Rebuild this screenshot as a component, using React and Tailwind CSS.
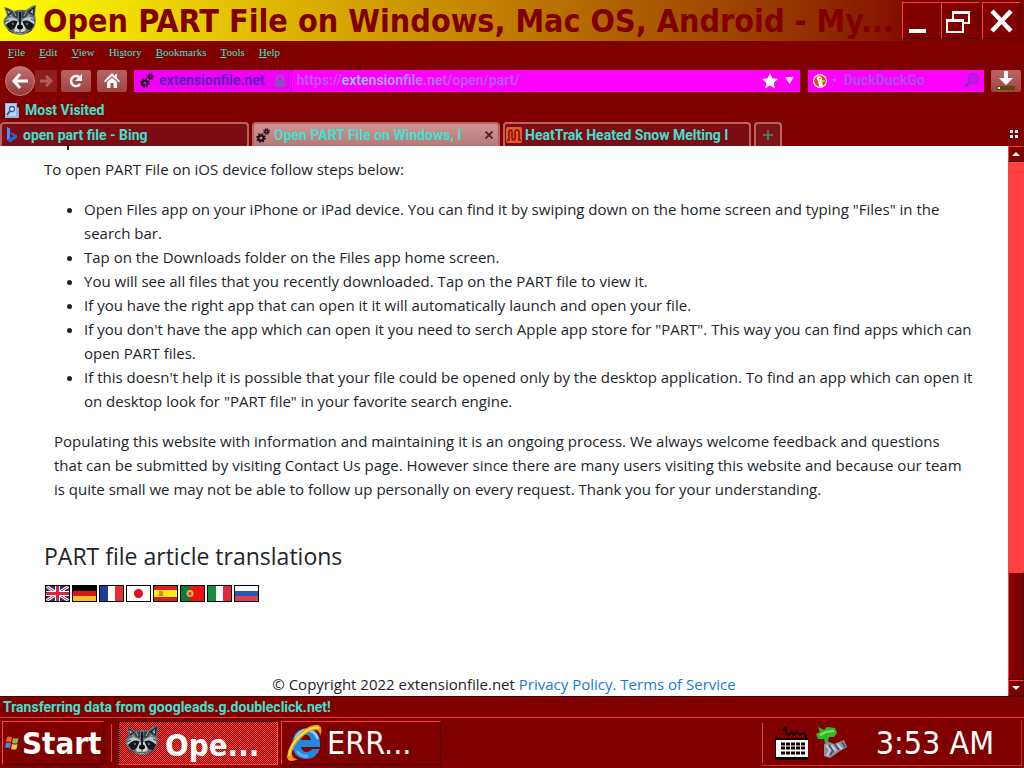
import React from 'react';

const raised = 'border border-t-[#ff4040] border-l-[#ff4040] border-b-[#401008] border-r-[#401008]';
const uiFont = "font-['Roboto','Liberation_Sans',sans-serif] text-[14px] font-bold";
const tahoma = "font-['DejaVu_Sans_Condensed','DejaVu_Sans',Tahoma,sans-serif]";

const Raccoon = ({ className }) => (
  <svg viewBox="0 0 34 32" className={className} aria-hidden="true">
    <path d="M1 2 L5 3 L11 6 Q17 4 23 5 L29 1 L33 0 L32 10 Q34 17 31 23 Q25 30 17 30 Q8 29 4 24 Q-1 19 1 14 L4 10 Z" fill="#66737b" />
    <path d="M3 3 L10 7 L5 11 Z M32 1 L24 7 L31 11 Z" fill="#1c2428" />
    <path d="M4 5 L8 7 L5 9 Z M30 4 L27 7 L30 9 Z" fill="#9aa7aa" />
    <path d="M9 8 L15 6 L15 13 L11 12 Z M19 6 L25 8 L22 13 L18 13 Z" fill="#364148" />
    <path d="M11 7 L13 11 M23 7 L21 11 M7 10 L9 12 M27 10 L25 12" stroke="#a2afb4" />
    <path d="M4 14 Q9 10 15 15 L14 18 Q9 16 3 20 Q1 18 4 14 Z M30 13 Q24 10 19 15 L20 18 Q25 16 31 19 Q32 17 30 13 Z" fill="#b9c6ca" />
    <path d="M3 20 Q8 14 14 16 L14 20 Q11 25 7 25 Z M31 20 Q26 14 20 16 L20 20 Q23 25 28 25 Z" fill="#11171b" />
    <path d="M14 18 Q17 15 20 18 L23 24 Q20 29 17 29 Q13 29 11 25 Z" fill="#cfd5d2" />
    <path d="M16 7 H18 V20 H16 Z" fill="#161d21" />
    <ellipse cx="17" cy="22" rx="3" ry="2.500" fill="#050708" />
    <path d="M17 24 V27 M13 27 Q17 29 21 27" stroke="#39434a" fill="none" />
    <circle cx="10" cy="19" r="1" fill="#7e8a90" />
    <circle cx="24" cy="19" r="1" fill="#7e8a90" />
    <path d="M5 25 L10 28 M29 25 L24 28 M2 17 L6 15 M32 16 L28 14" stroke="#333d44" />
  </svg>
);

const Gears = ({ className }) => (
  <svg viewBox="0 0 14 15" className={className} fill="none" stroke="#1a0a14" aria-hidden="true">
    <circle cx="5" cy="10" r="2.6" strokeWidth="2" />
    <circle cx="5" cy="10" r="4" strokeWidth="1.6" strokeDasharray="1.6 1.54" />
    <circle cx="10.500" cy="3.500" r="1.500" strokeWidth="1.500" />
    <circle cx="10.500" cy="3.500" r="2.700" strokeWidth="1.200" strokeDasharray="1.200 0.920" />
  </svg>
);

const WindowsFlag = () => (
  <svg viewBox="0 0 14 14" className="h-[14px] w-[14px] shrink-0" aria-hidden="true">
    <path d="M2 1 Q4 0 7 1.500 L6 6.500 Q4 5 1 6 Z" fill="#f0622c" />
    <path d="M8 2 Q11 3 13.500 2 L12.500 7 Q10 8 7 7 Z" fill="#7cc242" />
    <path d="M1 7 Q4 6 6 7.500 L5 12.500 Q3 11 0 12 Z" fill="#4a86e8" />
    <path d="M7 8 Q10 9 12.500 8 L11.500 13 Q9 14 6 13 Z" fill="#fbc72e" />
  </svg>
);

const IeLogo = () => (
  <svg viewBox="0 0 36 38" className="h-[38px] w-9 shrink-0" aria-hidden="true">
    <path
      d="M34 23 H15 Q16 28 21 28 Q24 28 26 25 H34 Q30 35 20 35 Q7 34 6 20 Q7 5 21 4 Q35 5 34 23 Z M15 16 H25 Q24 11 20 11 Q16 11 15 16 Z"
      fill="#2088e0"
      fillRule="evenodd"
    />
    <path d="M9 15 Q13 6 21 6 Q29 7 32 15" stroke="#8cd4ff" strokeWidth="2.500" fill="none" />
    <path d="M11 27 Q15 33 22 32" stroke="#58b4f4" strokeWidth="3" fill="none" />
    <path d="M12 35 Q2 40 1 33 Q2 20 15 8 Q28 -2 34 2 Q37 5 34 12 Q34 7 30 6 Q23 6 14 15 Q5 25 6 31 Q7 35 12 35 Z" fill="#f0981b" />
    <path d="M3 32 Q4 20 16 10 Q26 2 33 4" stroke="#ffe04a" strokeWidth="2" fill="none" />
  </svg>
);

const TitleBar = () => (
  <header className="flex h-[41px] items-center bg-linear-to-r from-[#ffff00] to-[#800000] to-90% pr-[3px] pl-[3px]">
    <Raccoon className="h-8 w-[34px] shrink-0" />
    <h1 className={`${tahoma} ml-1.5 min-w-0 flex-1 pt-0.5 text-[32px] leading-[39px] font-bold whitespace-nowrap text-[#800000]`}>
      Open PART File on Windows, Mac OS, Android - My...
    </h1>
    <div className="flex">
      <button aria-label="Minimize" className={`${raised} h-[37px] w-[39px] bg-[#800000]`}>
        <svg viewBox="0 0 37 35" fill="#fff">
          <path d="M6 26 H23 V30 H6 Z" />
        </svg>
      </button>
      <button aria-label="Restore" className={`${raised} h-[37px] w-[39px] bg-[#800000]`}>
        <svg viewBox="0 0 37 35" fill="none" stroke="#fff" strokeWidth="2">
          <path d="M11 16 V9 H27 V20 H22 M11 10 H27" />
          <path d="M5 17 H21 V29 H5 Z M5 18 H21" />
        </svg>
      </button>
      <button aria-label="Close" className={`${raised} ml-0.5 h-[37px] w-[39px] bg-[#800000]`}>
        <svg viewBox="0 0 37 35" stroke="#fff" strokeWidth="4.500">
          <path d="M9 8 L28 28 M28 8 L9 28" />
        </svg>
      </button>
    </div>
  </header>
);

const menus = [
  ['', 'F', 'ile'],
  ['', 'E', 'dit'],
  ['', 'V', 'iew'],
  ['Hi', 's', 'tory'],
  ['', 'B', 'ookmarks'],
  ['', 'T', 'ools'],
  ['', 'H', 'elp'],
];

const MenuBar = () => (
  <nav className="flex h-[22px] gap-3.5 pl-2 font-['Liberation_Serif',serif] text-[11px] leading-[22px] text-[#40e0d0]">
    {menus.map(([pre, key, post]) => (
      <button key={key + post}>
        {pre}
        <span className="underline">{key}</span>
        {post}
      </button>
    ))}
  </nav>
);

const navButton = 'flex h-[22px] w-[30px] shrink-0 items-center justify-center rounded-xs bg-linear-to-b from-[#b86464] to-[#a04444]';

const NavBar = () => (
  <div className="flex h-[35px] items-center pr-[3px] pl-[5px]">
    <button aria-label="Back" className="flex h-[30px] w-[30px] shrink-0 items-center justify-center rounded-full border border-[#c88080] bg-linear-to-b from-[#c07070] to-[#983838]">
      <svg viewBox="0 0 18 18" className="h-[18px] w-[18px]" fill="none" stroke="#fff" strokeWidth="3">
        <path d="M9 2 L3 9 L9 16 M3 9 H17" />
      </svg>
    </button>
    <button aria-label="Forward" className="flex h-[22px] w-[22px] shrink-0 items-center justify-center bg-[#8c1e1e]">
      <svg viewBox="0 0 14 14" className="h-[14px] w-[14px]" fill="none" stroke="#b85858" strokeWidth="3">
        <path d="M7 2 L12 7 L7 12 M1 7 H12" />
      </svg>
    </button>
    <button aria-label="Reload" className={`${navButton} ml-1`}>
      <svg viewBox="0 0 16 16" className="h-4 w-4">
        <path d="M12 11 A5 5 0 1 1 11 4" fill="none" stroke="#fff" strokeWidth="2.500" />
        <path d="M14 1 V8 H7 Z" fill="#fff" />
      </svg>
    </button>
    <button aria-label="Home" className={`${navButton} ml-1.5`}>
      <svg viewBox="0 0 16 16" className="h-4 w-4" fill="#fff">
        <path d="M8 0 L16 8 L15 9.500 L8 3 L1 9.500 L0 8 Z M11 1 H13 V5 L11 3 Z" />
        <path d="M3 9 L8 4.500 L13 9 V15 H9.500 V10 H6.500 V15 H3 Z" />
      </svg>
    </button>
    <div className={`${uiFont} ml-[7px] flex h-[22px] min-w-0 flex-1 items-center bg-[#ff00ff]`}>
      <button className="flex h-full shrink-0 items-center border-r border-[#c000d0] bg-[#f000f4] pl-1.5 text-[#5a20c0]">
        <Gears className="h-[15px] w-[14px]" />
        <span className="ml-[5px]">extensionfile.net</span>
        <svg viewBox="0 0 12 14" className="mr-[5px] ml-[9px] h-[14px] w-3" aria-hidden="true">
          <path d="M3 6 V4 Q3 1.500 6 1.500 Q9 1.500 9 4 V6" fill="none" stroke="#a050c8" strokeWidth="2" />
          <path d="M1 6 H11 V13 H1 Z" fill="#8a50b8" />
        </svg>
      </button>
      <input
        aria-label="Address"
        defaultValue="https://extensionfile.net/open/part/"
        className="ml-[5px] min-w-0 flex-1 bg-linear-to-r from-[#b45cf4] from-[45px] via-[#86ccf4] via-[45px] to-[#b45cf4] to-[156px] bg-clip-text text-transparent outline-none"
      />
      <button aria-label="Bookmark this page" className="shrink-0">
        <svg viewBox="0 0 16 16" className="h-4 w-4" fill="#fff">
          <path d="M8 0 L10.300 5.300 L16 6 L11.800 9.800 L13 15.500 L8 12.500 L3 15.500 L4.200 9.800 L0 6 L5.700 5.300 Z" />
        </svg>
      </button>
      <button aria-label="Show history" className="mr-[6px] ml-[7px] shrink-0">
        <svg viewBox="0 0 9 7" className="h-[7px] w-[9px]" fill="#ffd8ff">
          <path d="M0 0 H9 L4.500 7 Z" />
        </svg>
      </button>
    </div>
    <div className={`${uiFont} ml-2 flex h-[22px] w-[176px] shrink-0 items-center bg-[#ff00ff] px-[5px]`}>
      <svg viewBox="0 0 14 14" className="h-[14px] w-[14px] shrink-0" aria-hidden="true">
        <circle cx="7" cy="7" r="7" fill="#fff0d8" />
        <circle cx="7" cy="7" r="5.800" fill="#e04818" />
        <path d="M4 3 Q7 1 9 4 L9 6 L12 7 L9 8.500 L10 12 Q7 13 6 12 L5 7 Q3 5 4 3 Z" fill="#fff" />
        <path d="M8 6.500 H12 L9 9 Z" fill="#f8b020" />
        <circle cx="7" cy="4.500" r="0.700" fill="#333" />
      </svg>
      <svg viewBox="0 0 5 3" className="ml-[5px] h-[3px] w-[5px] shrink-0" fill="#c070f0" aria-hidden="true">
        <path d="M0 0 H5 L2.500 3 Z" />
      </svg>
      <input aria-label="Search" placeholder="DuckDuckGo" className="ml-[7px] min-w-0 flex-1 outline-none placeholder:text-[#a850e8]" />
      <button aria-label="Go" className="shrink-0">
        <svg viewBox="0 0 15 15" className="h-[15px] w-[15px]" fill="none" stroke="#7038c8">
          <circle cx="9.500" cy="5.500" r="4.500" strokeWidth="1.500" />
          <circle cx="9.500" cy="5.500" r="2" />
          <path d="M6 9 L1 14" strokeWidth="2.500" />
        </svg>
      </button>
    </div>
    <button aria-label="Downloads" className={`${navButton} ml-[7px]`}>
      <svg viewBox="0 0 20 20" className="h-5 w-5">
        <path d="M8 0 H12 V7 H17 L10 14 L3 7 H8 Z" fill="#fff" />
        <path d="M1 15 H19 V19 H1 Z" fill="#5a4a10" />
        <path d="M2 16 H4 V18 H2 Z" fill="#fff0a0" />
      </svg>
    </button>
  </div>
);

const BookmarksBar = () => (
  <div className={`${uiFont} flex h-6 items-center pl-[5px] text-[#40e0d0]`}>
    <button className="flex items-center">
      <svg viewBox="0 0 14 15" className="mr-1.5 h-[15px] w-[14px]" aria-hidden="true">
        <path d="M0 0 H12 V4 L14 5 V15 H0 Z" fill="#8cb4e4" />
        <path d="M1 1 H11 V13 H1 Z" fill="#b8d4f4" />
        <circle cx="7" cy="6" r="2.500" fill="#e8f4ff" stroke="#2858a0" strokeWidth="1.300" />
        <path d="M5 8 L2 12" stroke="#2858a0" strokeWidth="2" />
      </svg>
      Most Visited
    </button>
  </div>
);

const tabShape = 'flex h-6 shrink-0 items-center rounded-t-[4px] border-2 border-b-0 border-[#b86464]';

const TabBar = () => (
  <div className={`${uiFont} flex h-6 items-center gap-[3px] text-[#40e0d0]`} role="tablist">
    <button role="tab" aria-selected="false" className={`${tabShape} w-[249px] bg-[#7c0c14] pl-1`}>
      <svg viewBox="0 0 12 16" className="mr-[5px] h-4 w-3 shrink-0" aria-hidden="true">
        <path d="M1 0 L4 1.500 V11 L1 13 Z" fill="#4a94f0" />
        <path d="M1 13 L4 11 L8 9 L5 7.500 L4.500 5 L11 8 V11 L4 15.500 Z" fill="#2a62d8" />
      </svg>
      <span>open part file - Bing</span>
    </button>
    <div className={`${tabShape} w-[248px] bg-linear-to-b from-[#d09494] to-[#b87878] pl-0.5`}>
      <button role="tab" aria-selected="true" className="flex min-w-0 flex-1 items-center">
        <Gears className="h-[15px] w-[14px] shrink-0" />
        <span className="ml-1 whitespace-nowrap">Open PART File on Windows, I</span>
      </button>
      <button aria-label="Close tab" className="mr-[5px] shrink-0">
        <svg viewBox="0 0 8 8" className="h-2 w-2" stroke="#4a2020" strokeWidth="1.800">
          <path d="M0.500 0.500 L7.500 7.500 M7.500 0.500 L0.500 7.500" />
        </svg>
      </button>
    </div>
    <button role="tab" aria-selected="false" className={`${tabShape} w-[248px] bg-[#7c0c14] pl-px`}>
      <svg viewBox="0 0 16 16" className="mr-[3px] h-4 w-4 shrink-0" aria-hidden="true">
        <rect width="16" height="16" rx="2" fill="#f05828" />
        <path d="M1 13 H3 V5 Q3 3 5 3 Q6 3 6 5 V11 Q6 13 8 13 Q9 13 9 11 V5 Q9 3 11 3 Q13 3 13 5 V13 H15" fill="none" stroke="#70140c" strokeWidth="1.500" />
      </svg>
      <span className="whitespace-nowrap">HeatTrak Heated Snow Melting I</span>
    </button>
    <button aria-label="New tab" className={`${tabShape} w-7 justify-center bg-[#7c1414]`}>
      <svg viewBox="0 0 10 10" className="h-2.5 w-2.5" stroke="#4e7468" strokeWidth="2">
        <path d="M5 0 V10 M0 5 H10" />
      </svg>
    </button>
    <button aria-label="List all tabs" className="mr-1.5 ml-auto">
      <svg viewBox="0 0 8 8" className="h-2 w-2" fill="#fff">
        <path d="M0 0 H3 V3 H0 Z M5 0 H8 V3 H5 Z M0 5 H3 V8 H0 Z M5 5 H8 V8 H5 Z" />
      </svg>
    </button>
  </div>
);

const steps = [
  'Open Files app on your iPhone or iPad device. You can find it by swiping down on the home screen and typing "Files" in the search bar.',
  'Tap on the Downloads folder on the Files app home screen.',
  'You will see all files that you recently downloaded. Tap on the PART file to view it.',
  'If you have the right app that can open it it will automatically launch and open your file.',
  'If you don\'t have the app which can open it you need to serch Apple app store for "PART". This way you can find apps which can open PART files.',
  'If this doesn\'t help it is possible that your file could be opened only by the desktop application. To find an app which can open it on desktop look for "PART file" in your favorite search engine.',
];

const flags = [
  {
    name: 'English',
    art: (
      <>
        <path d="M0 0 H23 V15 H0 Z" fill="#283078" />
        <path d="M0 0 L23 15 M23 0 L0 15" stroke="#fff" strokeWidth="3" />
        <path d="M0 0 L23 15 M23 0 L0 15" stroke="#d02840" />
        <path d="M11.500 0 V15 M0 7.500 H23" stroke="#fff" strokeWidth="5" />
        <path d="M11.500 0 V15 M0 7.500 H23" stroke="#d02840" strokeWidth="3" />
      </>
    ),
  },
  {
    name: 'Deutsch',
    art: (
      <>
        <path d="M0 0 H23 V5 H0 Z" fill="#000" />
        <path d="M0 5 H23 V10 H0 Z" fill="#d81818" />
        <path d="M0 10 H23 V15 H0 Z" fill="#f8c020" />
      </>
    ),
  },
  {
    name: 'Français',
    art: (
      <>
        <path d="M0 0 H8 V15 H0 Z" fill="#203c98" />
        <path d="M8 0 H15 V15 H8 Z" fill="#fff" />
        <path d="M15 0 H23 V15 H15 Z" fill="#e83038" />
      </>
    ),
  },
  {
    name: '日本語',
    art: (
      <>
        <path d="M0 0 H23 V15 H0 Z" fill="#fff" />
        <circle cx="11.500" cy="7.500" r="4.500" fill="#d81020" />
      </>
    ),
  },
  {
    name: 'Español',
    art: (
      <>
        <path d="M0 0 H23 V15 H0 Z" fill="#d82020" />
        <path d="M0 4 H23 V11 H0 Z" fill="#ffe818" />
        <path d="M5 5 H9 V10 H5 Z" fill="#d88830" />
      </>
    ),
  },
  {
    name: 'Português',
    art: (
      <>
        <path d="M0 0 H9 V15 H0 Z" fill="#107838" />
        <path d="M9 0 H23 V15 H9 Z" fill="#f01010" />
        <circle cx="9" cy="7.500" r="3.500" fill="#d8c040" />
        <path d="M7.500 6 H10.500 V9.500 H7.500 Z" fill="#e04040" />
      </>
    ),
  },
  {
    name: 'Italiano',
    art: (
      <>
        <path d="M0 0 H8 V15 H0 Z" fill="#109040" />
        <path d="M8 0 H15 V15 H8 Z" fill="#fff" />
        <path d="M15 0 H23 V15 H15 Z" fill="#e02838" />
      </>
    ),
  },
  {
    name: 'Русский',
    art: (
      <>
        <path d="M0 0 H23 V5 H0 Z" fill="#fff" />
        <path d="M0 5 H23 V10 H0 Z" fill="#2858b0" />
        <path d="M0 10 H23 V15 H0 Z" fill="#d84050" />
      </>
    ),
  },
];

const Article = () => (
  <main className="min-w-0 flex-1 overflow-hidden bg-white px-11 font-['Open_Sans','Segoe_UI',sans-serif] text-[15px] leading-6 text-[#212529]">
    <div className="mb-[7px] ml-[23px] h-1 w-0.5 bg-[#212529]" />
    <p>To open PART File on iOS device follow steps below:</p>
    <ul className="my-4 -mr-4 list-disc pl-10">
      {steps.map((step) => (
        <li key={step}>{step}</li>
      ))}
    </ul>
    <p className="-mr-3 px-2.5">
      Populating this website with information and maintaining it is an ongoing process. We always welcome feedback and questions that can be
      submitted by visiting Contact Us page. However since there are many users visiting this website and because our team is quite small we may
      not be able to follow up personally on every request. Thank you for your understanding.
    </p>
    <h2 className="mt-10 text-[23px] leading-[30px]">PART file article translations</h2>
    <div className="mt-3.5 flex gap-0.5 pl-px">
      {flags.map((flag) => (
        <a key={flag.name} href="#" aria-label={flag.name} className="border border-black">
          <svg viewBox="0 0 23 15" className="h-[15px] w-[23px]">
            {flag.art}
          </svg>
        </a>
      ))}
    </div>
    <footer className="mt-[70px] text-center">
      © Copyright 2022 extensionfile.net{' '}
      <a href="#" className="text-[#1a7ad8]">
        Privacy Policy.
      </a>{' '}
      <a href="#" className="text-[#1a7ad8]">
        Terms of Service
      </a>
    </footer>
  </main>
);

const Scrollbar = () => (
  <div className="flex w-4 shrink-0 flex-col bg-[#ff4040]">
    <button aria-label="Scroll up" className={`${raised} flex h-4 items-center justify-center bg-[#800000]`}>
      <svg viewBox="0 0 8 4" className="h-1 w-2" fill="#fff">
        <path d="M4 0 L8 4 H0 Z" />
      </svg>
    </button>
    <div className={`${raised} mt-auto h-[108px] bg-[#800000]`} />
    <button aria-label="Scroll down" className={`${raised} flex h-4 items-center justify-center bg-[#800000]`}>
      <svg viewBox="0 0 8 4" className="h-1 w-2" fill="#fff">
        <path d="M0 0 H8 L4 4 Z" />
      </svg>
    </button>
  </div>
);

const Taskbar = () => (
  <footer className={`${tahoma} flex h-[51px] items-stretch border-t border-[#e04040] pt-0.5 pr-0.5 pb-0.5 pl-0.5 text-[32px] leading-none text-white`}>
    <button className={`${raised} my-px flex w-[102px] shrink-0 items-center gap-[3px] pl-0.5 font-bold`}>
      <WindowsFlag />
      <span className="text-[31px]">Start</span>
    </button>
    <div className="my-1 ml-[7px] w-0.5 border-l border-[#e04040]" />
    <button className="my-px ml-[5px] flex w-[160px] shrink-0 items-center border border-t-[#401008] border-r-[#ff4040] border-b-[#ff4040] border-l-[#401008] bg-[#800000] bg-[repeating-conic-gradient(#ff4040_0_25%,#800000_0_50%)] bg-size-[2px_2px] pl-1.5 font-bold">
      <Raccoon className="mb-1 h-8 w-[34px]" />
      <span className="mt-1 ml-1.5 text-[31px]">Ope...</span>
    </button>
    <button className={`${raised} my-px ml-[3px] flex w-[160px] shrink-0 items-center gap-[5px] pl-1`}>
      <IeLogo />
      <span>ERR...</span>
    </button>
    <div className="ml-auto flex items-center border-r border-b border-[#c03030] pr-[27px]">
      <div className="h-10 border-l border-[#e04040]" />
      <svg viewBox="0 0 33 34" className="ml-3 h-[34px] w-[33px]" aria-hidden="true">
        <path d="M7 5 L10 2 L11 6 L14 9 L17 6 L19 9 L22 6 L25 9 L28 7 L31 9 V12" fill="none" stroke="#180000" strokeWidth="2" />
        <path d="M0 12 H33 V34 H0 Z" fill="#100000" />
        <path d="M1 14 H33 V31 H1 Z" fill="#fff" />
        <path d="M6 18 H31 M6 22 H31 M6 27 H31" stroke="#100000" strokeWidth="3" strokeDasharray="4 1" />
      </svg>
      <svg viewBox="0 0 32 34" className="ml-2 h-[34px] w-8" aria-hidden="true">
        <path d="M2 1 L8 4 L11 1 L19 2 L21 7 L18 11 L13 11 L12 15 L14 19 L9 17 L8 13 L2 13 L0 8 L4 6 Z" fill="#30b830" />
        <path d="M4 9 L10 6 L18 5" stroke="#80e850" strokeWidth="2" fill="none" />
        <path d="M8 18 L13 16 L18 18 L28 14 L31 21 L24 25 L14 32 L8 30 Z" fill="#8c90a0" />
        <path d="M10 19 L14 24 L11 30 M15 19 L20 25 M21 18 L26 23" stroke="#c8ccd8" strokeWidth="2" fill="none" />
        <path d="M13 19 L17 25 L14 29 M19 18 L23 24 M26 16 L29 21" stroke="#484c60" strokeWidth="1.500" fill="none" />
      </svg>
      <time className="ml-7">3:53 AM</time>
    </div>
  </footer>
);

const App = () => (
  <div className="flex h-screen flex-col overflow-hidden bg-[#800000]">
    <TitleBar />
    <MenuBar />
    <NavBar />
    <BookmarksBar />
    <TabBar />
    <div className="flex min-h-0 flex-1">
      <Article />
      <Scrollbar />
    </div>
    <div className={`${uiFont} h-[21px] border-t border-[#400000] pl-[3px] leading-5 text-[#40e0d0]`} role="status">
      Transferring data from googleads.g.doubleclick.net!
    </div>
    <Taskbar />
  </div>
);

export default App;
